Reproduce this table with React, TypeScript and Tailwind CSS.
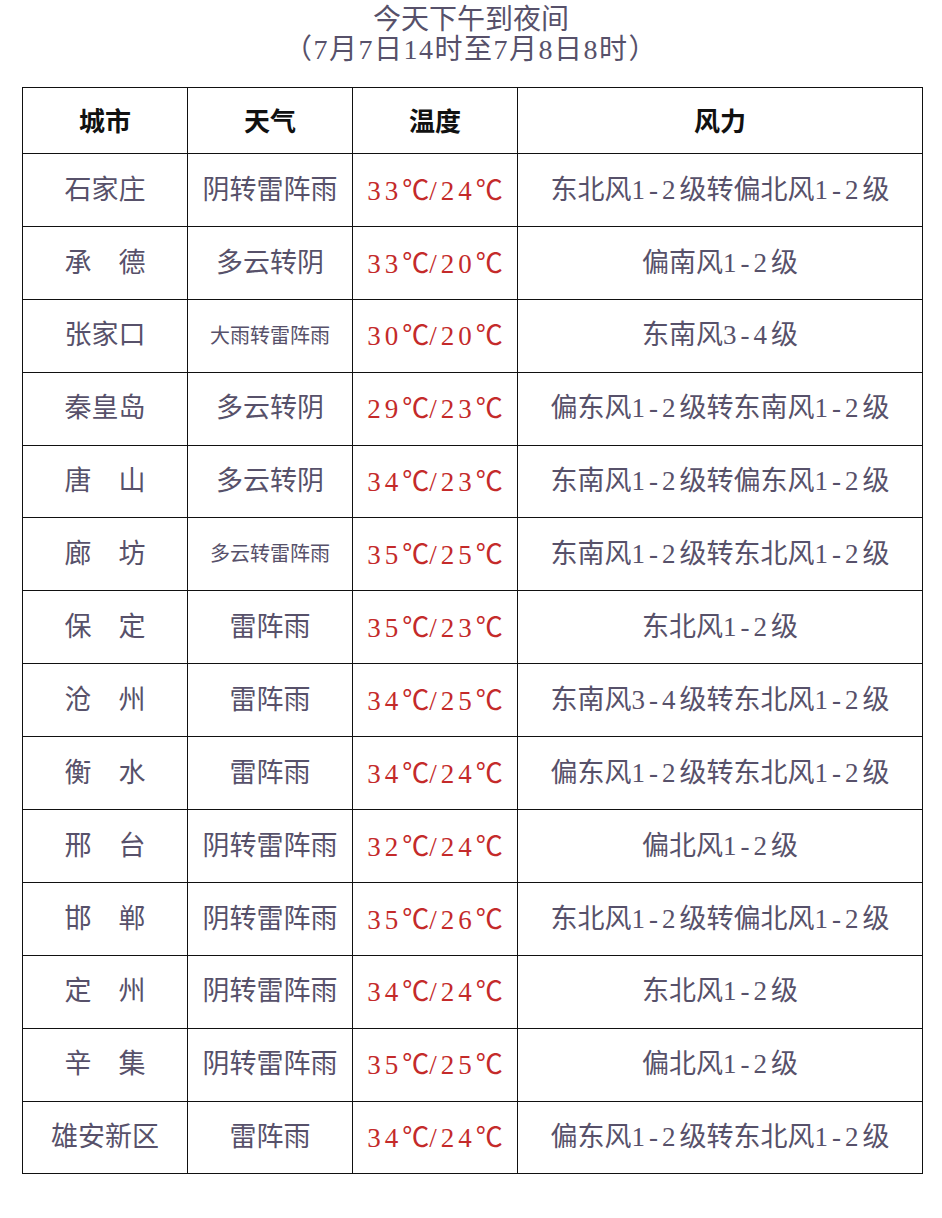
const rows: [string, string, string, string, boolean?][] = [
  ["石家庄", "阴转雷阵雨", "33℃/24℃", "东北风1-2级转偏北风1-2级"],
  ["承　德", "多云转阴", "33℃/20℃", "偏南风1-2级"],
  ["张家口", "大雨转雷阵雨", "30℃/20℃", "东南风3-4级", true],
  ["秦皇岛", "多云转阴", "29℃/23℃", "偏东风1-2级转东南风1-2级"],
  ["唐　山", "多云转阴", "34℃/23℃", "东南风1-2级转偏东风1-2级"],
  ["廊　坊", "多云转雷阵雨", "35℃/25℃", "东南风1-2级转东北风1-2级", true],
  ["保　定", "雷阵雨", "35℃/23℃", "东北风1-2级"],
  ["沧　州", "雷阵雨", "34℃/25℃", "东南风3-4级转东北风1-2级"],
  ["衡　水", "雷阵雨", "34℃/24℃", "偏东风1-2级转东北风1-2级"],
  ["邢　台", "阴转雷阵雨", "32℃/24℃", "偏北风1-2级"],
  ["邯　郸", "阴转雷阵雨", "35℃/26℃", "东北风1-2级转偏北风1-2级"],
  ["定　州", "阴转雷阵雨", "34℃/24℃", "东北风1-2级"],
  ["辛　集", "阴转雷阵雨", "35℃/25℃", "偏北风1-2级"],
  ["雄安新区", "雷阵雨", "34℃/24℃", "偏东风1-2级转东北风1-2级"],
]

const font = {
  fontFamily: '"Liberation Serif", "Noto Sans CJK SC", serif',
}

// digits in the source are set wider than Times, so space the ascii runs out a bit
function Spaced({ text }: { text: string }) {
  const parts = text.match(/[0-9\-\/]+|℃|[^0-9\-\/℃]+/g) ?? []
  return (
    <>
      {parts.map((p, i) =>
        /^[0-9\-\/]+$/.test(p) ? (
          <span key={i} className="tracking-[4px]">{p}</span>
        ) : p === "℃" ? (
          <span key={i} className="font-['Noto_Sans_CJK_SC'] text-[27px]">{p}</span>
        ) : (
          <span key={i}>{p}</span>
        )
      )}
    </>
  )
}

export default function App() {
  return (
    <div className="min-h-[1218px] w-[942px] bg-white pt-[5px]" style={font}>
      {/* Title */}
      <div className="text-center text-[28px] leading-[30px] text-[#57516a]">
        <div>今天下午到夜间</div>
        <div className="tracking-[1.5px]">（7月7日14时至7月8日8时）</div>
      </div>

      <table className="ml-[22px] mt-[22px] w-[901px] table-fixed border-collapse">
        <colgroup>
          <col className="w-[165px]" />
          <col className="w-[165px]" />
          <col className="w-[165px]" />
          <col />
        </colgroup>
        <thead>
          <tr className="h-[66px] text-[26px] font-bold text-[#111]">
            <th className="border border-[#111] pt-[3px]">城市</th>
            <th className="border border-[#111] pt-[3px]">天气</th>
            <th className="border border-[#111] pt-[3px]">温度</th>
            <th className="border border-[#111] pt-[3px]">风力</th>
          </tr>
        </thead>
        <tbody>
          {rows.map(([city, weather, temp, wind, small]) => (
            <tr key={city} className="h-[72.9px] text-[27px] text-[#57516a]">
              <td className="border border-[#111] text-center">{city}</td>
              <td
                className={
                  small
                    ? "border border-[#111] text-center text-[20px]"
                    : "border border-[#111] text-center"
                }
              >
                {weather}
              </td>
              <td className="border border-[#111] text-center text-[#c42a2a]">
                <Spaced text={temp} />
              </td>
              <td className="border border-[#111] text-center">
                <Spaced text={wind} />
              </td>
            </tr>
          ))}
        </tbody>
      </table>
    </div>
  )
}
